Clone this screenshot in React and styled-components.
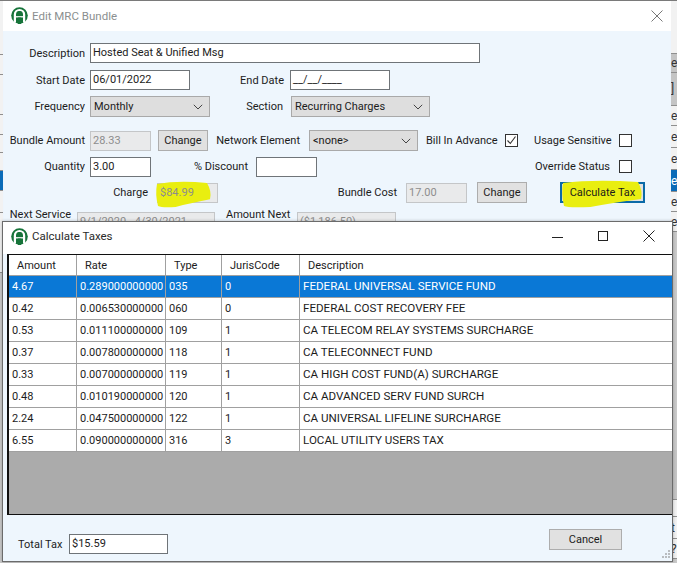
import React from "react";
import styled, { createGlobalStyle } from "styled-components";

const Global = createGlobalStyle`
  html, body { margin: 0; padding: 0; background: #cfcfcf; }
  * { box-sizing: border-box; }
`;

const Desktop = styled.div`
  position: relative;
  width: 677px;
  height: 563px;
  overflow: hidden;
  background: #c9c9c9;
  font-family: Roboto, "Noto Sans", sans-serif;
  font-size: 11px;
  color: #1c1c1c;
`;

/* Application behind the dialogs, only its edges peek out */
const Backdrop = styled.div`
  position: absolute;
  top: ${(p) => p.$top}px;
  left: ${(p) => p.$left}px;
  width: ${(p) => p.$width}px;
  display: flex;
  flex-direction: column;
  background: #f0f0f0;
`;
const BackRow = styled.div`
  height: ${(p) => p.$h || 22}px;
  border-bottom: 1px solid #8f8f8f;
  background: ${(p) => (p.$blue ? "#0a6bb8" : p.$grey ? "#c4c4c4" : "#f2f2f2")};
  color: ${(p) => (p.$blue ? "#fff" : "#333")};
  line-height: ${(p) => p.$h || 22}px;
  padding-left: 1px;
  overflow: hidden;
  font-size: 12px;
`;
const TopEdge = styled.div`
  position: absolute;
  left: 0;
  top: 0;
  width: 677px;
  height: 1px;
  background: #7a7a7a;
`;

const Window = styled.section`
  position: absolute;
  top: ${(p) => p.$top}px;
  left: ${(p) => p.$left}px;
  width: ${(p) => p.$width}px;
  height: ${(p) => p.$height}px;
  background: #eef6fd;
  box-shadow: ${(p) => p.$shadow || "none"};
  border: ${(p) => p.$border || "none"};
  display: flex;
  flex-direction: column;
  overflow: hidden;
`;
const TitleBar = styled.header`
  height: ${(p) => p.$h}px;
  flex: none;
  background: #fff;
  display: flex;
  align-items: center;
  padding: 0 0 ${(p) => p.$pb}px ${(p) => p.$pl}px;
`;
const LogoSlot = styled.span`
  display: flex;
  margin-right: 4px;
`;
const TitleText = styled.span`
  flex: 1;
  color: ${(p) => (p.$dim ? "#8b8f90" : "#2a2a2a")};
  font-size: 11.5px;
`;
const WinBtn = styled.span`
  width: ${(p) => p.$w}px;
  height: 100%;
  display: flex;
  align-items: center;
  justify-content: center;
`;

const Form = styled.div`
  flex: 1;
  display: flex;
  flex-direction: column;
  padding-top: 12px;
  box-shadow: inset 0 -6px 6px -6px #c8ccd0;
`;
const Row = styled.div`
  display: flex;
  align-items: ${(p) => (p.$top ? "flex-start" : "center")};
  height: ${(p) => p.$h}px;
  flex: none;
  margin-bottom: ${(p) => p.$mb || 0}px;
`;
const Label = styled.label`
  width: ${(p) => p.$w}px;
  margin-left: ${(p) => p.$ml || 0}px;
  flex: none;
  text-align: right;
  white-space: nowrap;
  font-size: 11px;
`;
const Input = styled.div`
  position: relative;
  width: ${(p) => p.$w}px;
  height: ${(p) => p.$h || 20}px;
  margin-left: ${(p) => p.$ml || 0}px;
  margin-top: ${(p) => p.$mt || 0}px;
  flex: none;
  border: 1px solid ${(p) => (p.$disabled ? "#c4c6c8" : "#6f7478")};
  background: ${(p) => (p.$disabled ? "#e9eaeb" : "#fff")};
  color: ${(p) => (p.$disabled ? "#8d8d8d" : "#1c1c1c")};
  padding-left: 2px;
  line-height: 17px;
  font-size: 11px;
  white-space: nowrap;
`;
const Select = styled.div`
  width: ${(p) => p.$w}px;
  height: 21px;
  margin-left: ${(p) => p.$ml || 0}px;
  flex: none;
  border: 1px solid #a9a9a9;
  background: #dedede;
  padding: 0 6px 0 3px;
  display: flex;
  align-items: center;
  justify-content: space-between;
  font-size: 11px;
`;
const Button = styled.button`
  position: relative;
  width: ${(p) => p.$w}px;
  height: ${(p) => p.$h || 21}px;
  margin-left: ${(p) => p.$ml || 0}px;
  flex: none;
  padding: 0;
  border: ${(p) => (p.$focus ? "2px solid #0a6aa8" : "1px solid #adadad")};
  background: #e1e1e1;
  color: #1c1c1c;
  font-family: inherit;
  font-size: 11px;
`;
const OverText = styled.span`
  position: relative;
  z-index: 1;
`;
const Check = styled.span`
  width: 13px;
  height: 13px;
  margin-left: ${(p) => p.$ml || 0}px;
  flex: none;
  border: 1px solid #333;
  background: #fff;
  display: flex;
  align-items: center;
  justify-content: center;
`;
const Highlight = styled.svg`
  position: absolute;
  left: ${(p) => p.$x}px;
  top: ${(p) => p.$y}px;
  pointer-events: none;
  overflow: visible;
`;

/* Calculate Taxes */
const Grid = styled.div`
  height: 261px;
  margin-left: 4px;
  border: 1px solid #101010;
  border-right: none;
  border-left-width: 2px;
  background: #ababab;
  flex: none;
`;
const GridRow = styled.div`
  display: grid;
  grid-template-columns: 68px 89px 56px 78px 1fr;
  height: ${(p) => (p.$head ? 21 : 22)}px;
  background: ${(p) => (p.$sel ? "#0a78d6" : "#fff")};
  color: ${(p) => (p.$sel ? "#fff" : "#1c1c1c")};
  border-bottom: 1px solid #a0a0a0;
  font-size: 11px;
`;
const Cell = styled.div`
  border-right: 1px solid #a0a0a0;
  padding-left: ${(p) => (p.$head ? 8 : 3)}px;
  line-height: ${(p) => (p.$head ? 22 : 21)}px;
  white-space: nowrap;
  overflow: hidden;
  &:last-child {
    border-right: none;
    font-size: ${(p) => (p.$head ? 11 : 11.6)}px;
  }
`;
const Footer = styled.footer`
  flex: 1;
  position: relative;
  display: flex;
  align-items: flex-start;
  justify-content: space-between;
  padding: 14px 50px 0 15px;
`;
const TotalGroup = styled.div`
  display: flex;
  align-items: center;
  gap: 7px;
  margin-top: 5px;
`;
const Grip = styled.svg`
  position: absolute;
  right: 1px;
  bottom: 1px;
`;

const Logo = () => (
  <svg width="17" height="17" viewBox="0 0 17 17">
    <circle cx="8.5" cy="8.5" r="8.3" fill="#17743a" />
    <path d="M3.9 15.5 V7.6 a4.6 4.6 0 0 1 9.2 0 V15.5" fill="none" stroke="#fff" strokeWidth="2.2" />
    <circle cx="8.5" cy="6.6" r="2.5" fill="#17743a" />
    <path d="M4 9.8 H13" stroke="#fff" strokeWidth="1.3" />
    <path d="M8.5 10.5 V17" stroke="#17743a" strokeWidth="3.4" />
  </svg>
);
const Chevron = () => (
  <svg width="10" height="6" viewBox="0 0 10 6">
    <path d="M0.8 0.8 L5 5 L9.2 0.8" fill="none" stroke="#444" strokeWidth="1" />
  </svg>
);
const CloseIcon = ({ color = "#222", size = 12 }) => (
  <svg width={size} height={size} viewBox="0 0 12 12">
    <path d="M0.5 0.5 L11.5 11.5 M11.5 0.5 L0.5 11.5" stroke={color} strokeWidth="1" />
  </svg>
);
const MinIcon = () => (
  <svg width="11" height="11" viewBox="0 0 11 11">
    <path d="M0 6.5 H11" stroke="#222" strokeWidth="1" />
  </svg>
);
const MaxIcon = () => (
  <svg width="10" height="10" viewBox="0 0 10 10">
    <rect x="0.5" y="0.5" width="9" height="9" fill="none" stroke="#222" strokeWidth="1" />
  </svg>
);
const Tick = () => (
  <svg width="11" height="11" viewBox="0 0 11 11">
    <path d="M1.5 5.5 L4.3 8.5 L9.5 1.5" fill="none" stroke="#333" strokeWidth="1.1" />
  </svg>
);

const leftRows = [
  { h: 55 }, { h: 20, t: "" }, { h: 40, t: "" }, { h: 20, t: "" },
  { h: 18, t: "" }, { h: 18, t: "" }, { h: 20, t: "", blue: true }, { h: 22, t: "" }, { h: 60 },
];
const rightRows = [
  { h: 54 }, { h: 19, t: "e", grey: true }, { h: 33, t: "]", grey: true }, { h: 20, t: "e" }, { h: 22, t: "e" },
  { h: 22, t: "e" }, { h: 22, t: "e", blue: true }, { h: 20, t: "e" }, { h: 20, t: "e" },
];
const rightLow = [
  { h: 50, t: "", grey: true }, { h: 17, t: "" }, { h: 22, t: "t" }, { h: 20, t: "?" },
];

const rows = [
  ["4.67", "0.289000000000", "035", "0", "FEDERAL UNIVERSAL SERVICE FUND"],
  ["0.42", "0.006530000000", "060", "0", "FEDERAL COST RECOVERY FEE"],
  ["0.53", "0.011100000000", "109", "1", "CA TELECOM RELAY SYSTEMS SURCHARGE"],
  ["0.37", "0.007800000000", "118", "1", "CA TELECONNECT FUND"],
  ["0.33", "0.007000000000", "119", "1", "CA HIGH COST FUND(A) SURCHARGE"],
  ["0.48", "0.010190000000", "120", "1", "CA ADVANCED SERV FUND SURCH"],
  ["2.24", "0.047500000000", "122", "1", "CA UNIVERSAL LIFELINE  SURCHARGE"],
  ["6.55", "0.090000000000", "316", "3", "LOCAL UTILITY USERS TAX"],
];

const Blob = ({ x, y, w, h }) => (
  <Highlight $x={x} $y={y} width={w} height={h} viewBox={`0 0 ${w} ${h}`}>
    <path
      d={`M1 3 Q${w * 0.4} -1 ${w - 5} 2 Q${w} ${h * 0.4} ${w - 2} ${h * 0.7} Q${w * 0.6} ${h * 0.85} ${w * 0.35} ${h} Q6 ${h + 1} 2 ${h - 1} Q-1 ${h * 0.5} 1 3 Z`}
      fill="#e9ee10"
    />
  </Highlight>
);

export default function App() {
  return (
    <Desktop>
      <Global />
      <Backdrop $top={0} $left={0} $width={4}>
        {leftRows.map((r, i) => (
          <BackRow key={i} $h={r.h} $blue={r.blue}>{r.t}</BackRow>
        ))}
      </Backdrop>
      <Backdrop $top={0} $left={670} $width={7}>
        {rightRows.map((r, i) => (
          <BackRow key={i} $h={r.h} $blue={r.blue} $grey={r.grey}>{r.t}</BackRow>
        ))}
      </Backdrop>
      <Backdrop $top={450} $left={670} $width={7}>
        {rightLow.map((r, i) => (
          <BackRow key={i} $h={r.h} $grey={r.grey}>{r.t}</BackRow>
        ))}
      </Backdrop>
      <TopEdge />

      <Window $top={1} $left={3} $width={668} $height={221}>
        <TitleBar $h={30} $pl={8} $pb={1}>
          <LogoSlot><Logo /></LogoSlot>
          <TitleText $dim>Edit MRC Bundle</TitleText>
          <WinBtn $w={28}><CloseIcon color="#777" /></WinBtn>
        </TitleBar>
        <Form>
          <Row $h={20} $mb={7}>
            <Label $w={82}>Description</Label>
            <Input $w={390} $ml={5}>Hosted Seat &amp; Unified Msg</Input>
          </Row>
          <Row $h={20} $mb={6}>
            <Label $w={82}>Start Date</Label>
            <Input $w={100} $ml={5}>06/01/2022</Input>
            <Label $w={94}>End Date</Label>
            <Input $w={100} $ml={6}>__/__/____</Input>
          </Row>
          <Row $h={21} $mb={13}>
            <Label $w={82}>Frequency</Label>
            <Select $w={120} $ml={5}>Monthly<Chevron /></Select>
            <Label $w={73}>Section</Label>
            <Select $w={139} $ml={8}>Recurring Charges<Chevron /></Select>
          </Row>
          <Row $h={21} $mb={5}>
            <Label $w={82}>Bundle Amount</Label>
            <Input $w={61} $ml={5} $disabled>28.33</Input>
            <Button $w={50} $ml={7}>Change</Button>
            <Label $w={85} $ml={7}>Network Element</Label>
            <Select $w={109} $ml={9}>&lt;none&gt;<Chevron /></Select>
            <Label $w={70} $ml={8}>Bill In Advance</Label>
            <Check $ml={9}><Tick /></Check>
            <Label $w={76} $ml={16}>Usage Sensitive</Label>
            <Check $ml={9} />
          </Row>
          <Row $h={21} $mb={5}>
            <Label $w={82}>Quantity</Label>
            <Input $w={61} $ml={5}>3.00</Input>
            <Label $w={97}>% Discount</Label>
            <Input $w={61} $ml={8}>{""}</Input>
            <Label $w={293}>Override Status</Label>
            <Check $ml={9} />
          </Row>
          <Row $h={21} $mb={5}>
            <Label $w={145}>Charge</Label>
            <Input $w={61} $ml={9} $disabled>
              <Blob x={-2} y={-3} w={56} h={26} />
              <OverText>$84.99</OverText>
            </Input>
            <Label $w={179}>Bundle Cost</Label>
            <Input $w={61} $ml={9} $disabled>17.00</Input>
            <Button $w={50} $ml={10}>Change</Button>
            <Button $w={85} $ml={33} $focus>
              <Blob x={0} y={-4} w={81} h={27} />
              <OverText>Calculate Tax</OverText>
            </Button>
          </Row>
          <Row $h={24} $top>
            <Label $w={68}>Next Service</Label>
            <Input $w={138} $ml={6} $mt={4} $disabled>9/1/2020 - 4/30/2021</Input>
            <Label $w={60} $ml={11}>Amount Next</Label>
            <Input $w={99} $ml={11} $mt={4} $disabled>($1,186.50)</Input>
          </Row>
        </Form>
      </Window>

      <Window $top={221} $left={2} $width={671} $height={341} $border="1px solid #6b6b6b" $shadow="0 0 3px rgba(0,0,0,.25)">
        <TitleBar $h={32} $pl={8} $pb={4}>
          <LogoSlot><Logo /></LogoSlot>
          <TitleText>Calculate Taxes</TitleText>
          <WinBtn $w={46}><MinIcon /></WinBtn>
          <WinBtn $w={46}><MaxIcon /></WinBtn>
          <WinBtn $w={46}><CloseIcon /></WinBtn>
        </TitleBar>
        <Grid>
          <GridRow $head>
            <Cell $head>Amount</Cell>
            <Cell $head>Rate</Cell>
            <Cell $head>Type</Cell>
            <Cell $head>JurisCode</Cell>
            <Cell $head>Description</Cell>
          </GridRow>
          {rows.map((r, i) => (
            <GridRow key={i} $sel={i === 0}>
              {r.map((c, j) => (
                <Cell key={j}>{c}</Cell>
              ))}
            </GridRow>
          ))}
        </Grid>
        <Footer>
          <TotalGroup>
            <Label $w={44}>Total Tax</Label>
            <Input $w={99}>$15.59</Input>
          </TotalGroup>
          <Button $w={73}>Cancel</Button>
          <Grip width="12" height="12" viewBox="0 0 12 12">
            <path d="M9 2h2v2H9zM6 5h2v2H6zM9 5h2v2H9zM3 8h2v2H3zM6 8h2v2H6zM9 8h2v2H9z" fill="#b9bcbf" />
          </Grip>
        </Footer>
      </Window>
    </Desktop>
  );
}
